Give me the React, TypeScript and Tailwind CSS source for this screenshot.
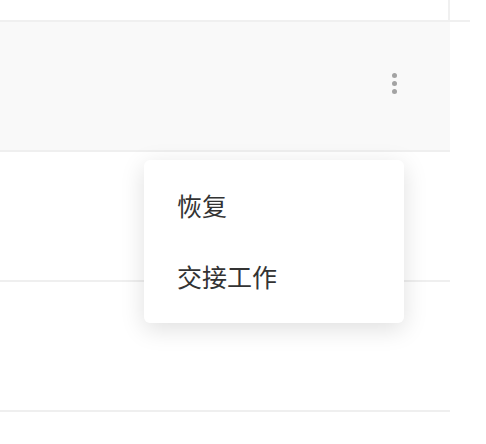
import React from 'react';

const rows = [
  { id: 1, active: true },
  { id: 2, active: false },
  { id: 3, active: false },
];

export default function App() {
  return (
    <div
      className="relative h-[444px] w-[486px] overflow-hidden bg-white"
      style={{ fontFamily: '"Noto Sans CJK SC", "Noto Sans", sans-serif' }}
    >
      {/* top strip */}
      <div className="flex">
        <div className="h-[22px] w-[450px] border-b-2 border-r-2 border-[#f0f0f0]" />
        <div className="h-[22px] w-[20px] border-b-2 border-[#f0f0f0]" />
      </div>

      {rows.map((row) => (
        <div
          key={row.id}
          className={`flex h-[130px] w-[450px] items-center justify-end border-b-2 border-[#efefef] pr-[49px] ${
            row.active ? 'bg-[#f9f9f9]' : 'bg-white'
          }`}
        >
          {row.active && (
            <button className="-mt-[5px] flex flex-col items-center gap-[3px] p-1">
              <span className="h-[5px] w-[5px] rounded-full bg-[#a3a3a3]" />
              <span className="h-[5px] w-[5px] rounded-full bg-[#a3a3a3]" />
              <span className="h-[5px] w-[5px] rounded-full bg-[#a3a3a3]" />
            </button>
          )}
        </div>
      ))}

      {/* dropdown menu */}
      <div className="absolute left-[144px] top-[160px] w-[260px] rounded-[6px] bg-white pb-[11px] pt-[10px] shadow-[0_6px_24px_rgba(0,0,0,0.13)]">
        <div className="flex h-[71px] items-center pl-[33px] text-[25px] text-[#333333]">恢复</div>
        <div className="flex h-[71px] items-center pl-[33px] text-[25px] text-[#333333]">交接工作</div>
      </div>
    </div>
  );
}
